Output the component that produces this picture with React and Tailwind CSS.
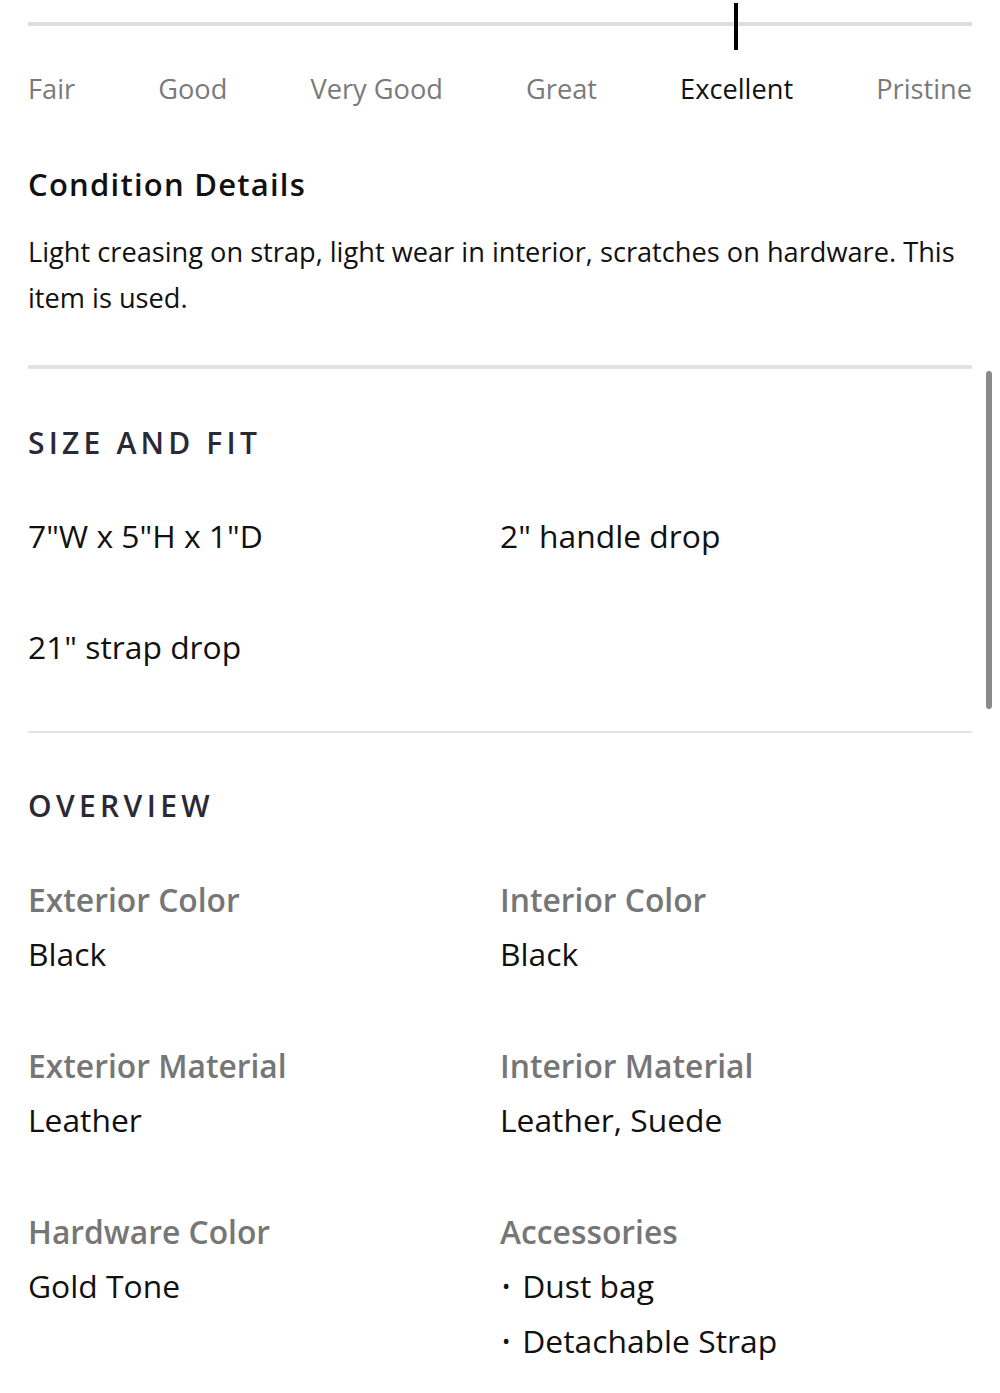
import React from "react";

const levels = ["Fair", "Good", "Very Good", "Great", "Excellent", "Pristine"];

function Item({ label, values, bullets }) {
  return (
    <div>
      <div className="text-[31.8px] leading-[40px] font-semibold text-[#767676]">{label}</div>
      <div className="mt-[6px]">
        {values.map((v) => (
          <div key={v} className="text-[31.8px] leading-[55px] text-[#111] flex items-center">
            {bullets && <span className="text-[22px] ml-[2px] mr-[12px]">•</span>}
            <span>{v}</span>
          </div>
        ))}
      </div>
    </div>
  );
}

export default function App() {
  return (
    <div className="relative min-h-[1393px] bg-white" style={{ fontFamily: '"Open Sans", "Noto Sans", sans-serif' }}>
      <div className="px-[28px] pt-[22px] pb-[24px]">
        {/* slider */}
        <div className="relative h-[4px] bg-[#dedede]">
          <div className="absolute left-[706px] top-[-19px] h-[47px] w-[4px] bg-black" />
        </div>
        <div className="mt-[45px] flex justify-between text-[27.2px] leading-[36px] text-[#7a7a7a]">
          {levels.map((l) => (
            <span key={l} className={l === "Excellent" ? "text-[#111]" : ""}>{l}</span>
          ))}
        </div>

        <h2 className="mt-[57px] text-[31px] leading-[40px] font-semibold tracking-[0.04em] text-[#111]">Condition Details</h2>
        <p className="mt-[25px] text-[27.2px] leading-[46px] text-[#111]">
          Light creasing on strap, light wear in interior, scratches on hardware. This item is used.
        </p>

        <div className="mt-[44px] h-[4px] bg-[#e2e2e2]" />

        <h3 className="mt-[54px] text-[30px] leading-[40px] font-semibold tracking-[0.14em] uppercase text-[#2a2a36]">Size and Fit</h3>
        <div className="mt-[53px] grid grid-cols-2 gap-y-[71px] text-[31.8px] leading-[40px] text-[#111]">
          <div>7"W x 5"H x 1"D</div>
          <div>2" handle drop</div>
          <div>21" strap drop</div>
        </div>

        <div className="mt-[64px] h-[2px] bg-[#e4e4e4]" />

        <h3 className="mt-[53px] text-[30px] leading-[40px] font-semibold tracking-[0.145em] uppercase text-[#2a2a36]">Overview</h3>
        <div className="mt-[54px] grid grid-cols-2 gap-y-[65px]">
          <Item label="Exterior Color" values={["Black"]} />
          <Item label="Interior Color" values={["Black"]} />
          <Item label="Exterior Material" values={["Leather"]} />
          <Item label="Interior Material" values={["Leather, Suede"]} />
          <Item label="Hardware Color" values={["Gold Tone"]} />
          <Item label="Accessories" values={["Dust bag", "Detachable Strap"]} bullets />
        </div>
      </div>
      <div className="absolute left-[986px] top-[371px] h-[338px] w-[6px] rounded-full bg-[#8a8a8a]" />
    </div>
  );
}
